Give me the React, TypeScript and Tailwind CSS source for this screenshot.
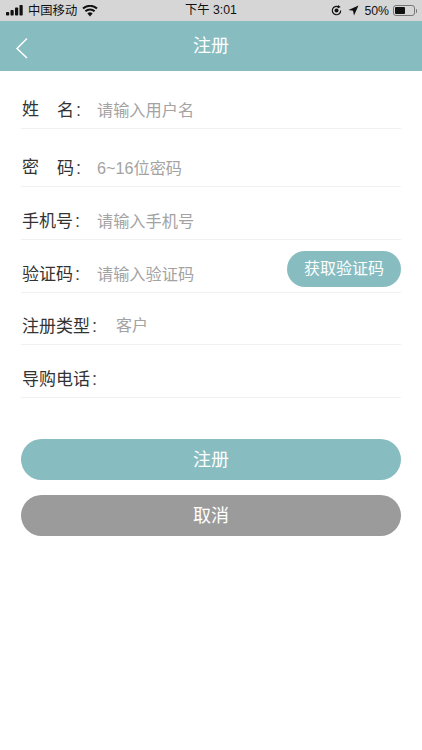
import React from 'react';

const cjk = "font-['Helvetica_Neue','Liberation_Sans','Noto_Sans_CJK_SC',sans-serif]";

const rows = [
  { label: '姓', label2: '名', hint: '请输入用户名', h: 'h-[58px]' },
  { label: '密', label2: '码', hint: '6~16位密码', h: 'h-[58px]' },
  { label: '手机号', hint: '请输入手机号', h: 'h-[53px]' },
];

const Colon: React.FC = () => <span className="ml-[2px] text-[18px] text-[#444]">:</span>;

const StatusBar: React.FC = () => (
  <div className="h-[21px] bg-[#d6d6d6] flex items-center justify-between pl-[6px] pr-[5px] text-[#111] text-[12.3px] relative">
    <div className="flex items-center gap-[4px]">
      <svg width="19" height="11" viewBox="0 0 19 11" fill="#111">
        <rect x="0" y="7" width="3.2" height="3.5" rx="0.8" />
        <rect x="4.5" y="5" width="3.2" height="5.5" rx="0.8" />
        <rect x="9" y="2.5" width="3.2" height="8" rx="0.8" />
        <rect x="13.5" y="0" width="3.2" height="10.5" rx="0.8" />
      </svg>
      <span className="-ml-[1px] pt-[1px]">中国移动</span>
      <svg width="16" height="12" viewBox="0 0 16 12" className="ml-[1px]">
        <path d="M8 11.5 L5.4 8.4 A3.8 3.8 0 0 1 10.6 8.4 Z" fill="#111" />
        <path d="M3.4 6.2 A6.8 6.8 0 0 1 12.6 6.2" stroke="#111" strokeWidth="2" fill="none" />
        <path d="M1 3.6 A10.2 10.2 0 0 1 15 3.6" stroke="#111" strokeWidth="2" fill="none" />
      </svg>
    </div>
    <span className="absolute left-[185px] top-[2px] leading-[17px]">下午 3:01</span>
    <div className="flex items-center gap-[4px]">
      <svg width="13" height="13" viewBox="0 0 13 13" fill="none">
        <path d="M10.7 6.5 A4.2 4.2 0 1 1 8.6 2.9" stroke="#111" strokeWidth="1.2" />
        <path d="M8 1 L10.6 3 L7.6 4.4 Z" fill="#111" />
        <circle cx="6.5" cy="6.5" r="2" fill="#111" />
      </svg>
      <svg width="11" height="11" viewBox="0 0 11 11" fill="#111" className="ml-[1px]">
        <path d="M10.5 0.5 L0.5 5 L5 5.8 L6 10.5 Z" />
      </svg>
      <span className="ml-[1px] pt-[1px]">50%</span>
      <div className="flex items-center">
        <div className="w-[22px] h-[11px] rounded-[3px] border border-[#777] p-[1px]">
          <div className="w-[10px] h-full bg-[#111] rounded-[1px]" />
        </div>
        <div className="w-[1.5px] h-[4px] bg-[#777] rounded-r-sm ml-[0.5px]" />
      </div>
    </div>
  </div>
);

const Row: React.FC<{ h: string; children: React.ReactNode; className?: string }> = ({ h, children, className }) => (
  <div className={`${h} flex items-end pb-[7px] border-b border-[#f1f1f1] relative ${className ?? ''}`}>{children}</div>
);

const App: React.FC = () => {
  return (
    <div className={`w-[422px] h-[750px] bg-white overflow-hidden ${cjk}`}>
      <StatusBar />
      <div className="h-[50px] bg-[#87bdc1] flex items-center justify-center relative text-white text-[18px]">
        <svg width="14" height="22" viewBox="0 0 14 22" fill="none" className="absolute left-[15px] top-[16px]">
          <path d="M12 1.5 L2 11.5 L12 21" stroke="white" strokeWidth="1.5" />
        </svg>
        <span>注册</span>
      </div>

      <div className="px-[21px]">
        {rows.map((r) => (
          <Row key={r.hint} h={r.h}>
            {r.label2 ? (
              <span className="w-[76px] pl-[1px] flex text-[17px] leading-[20px] text-[#333]">
                <span className="w-[35px]">{r.label}</span>
                <span>
                  {r.label2}
                  <Colon />
                </span>
              </span>
            ) : (
              <span className="w-[76px] pl-[1px] text-[17px] leading-[20px] text-[#333]">
                {r.label}
                <Colon />
              </span>
            )}
            <span className="mb-[1px] text-[16.2px] leading-[20px] text-[#a3a3a3]">{r.hint}</span>
          </Row>
        ))}
        <Row h="h-[53px]">
          <span className="w-[76px] pl-[1px] text-[17px] leading-[20px] text-[#333]">
            验证码
            <Colon />
          </span>
          <span className="mb-[1px] text-[16.2px] leading-[20px] text-[#a3a3a3]">请输入验证码</span>
          <button className="absolute right-0 top-[11px] w-[114px] h-[36px] rounded-full bg-[#87bdc1] text-white text-[16px]">
            获取验证码
          </button>
        </Row>
        <Row h="h-[52px]">
          <span className="w-[95px] pl-[1px] text-[17px] leading-[20px] text-[#333]">
            注册类型
            <Colon />
          </span>
          <span className="mb-[1px] text-[16px] leading-[20px] text-[#a3a3a3]">客户</span>
        </Row>
        <Row h="h-[53px]">
          <span className="pl-[1px] text-[17px] leading-[20px] text-[#333]">
            导购电话
            <Colon />
          </span>
        </Row>

        <button className="mt-[41px] w-full h-[41px] pt-[1px] rounded-full bg-[#87bdc1] text-white text-[18px] block">注册</button>
        <button className="mt-[15px] w-full h-[41px] pt-[1px] rounded-full bg-[#9b9b9b] text-white text-[18px] block">取消</button>
      </div>
    </div>
  );
};

export default App;
